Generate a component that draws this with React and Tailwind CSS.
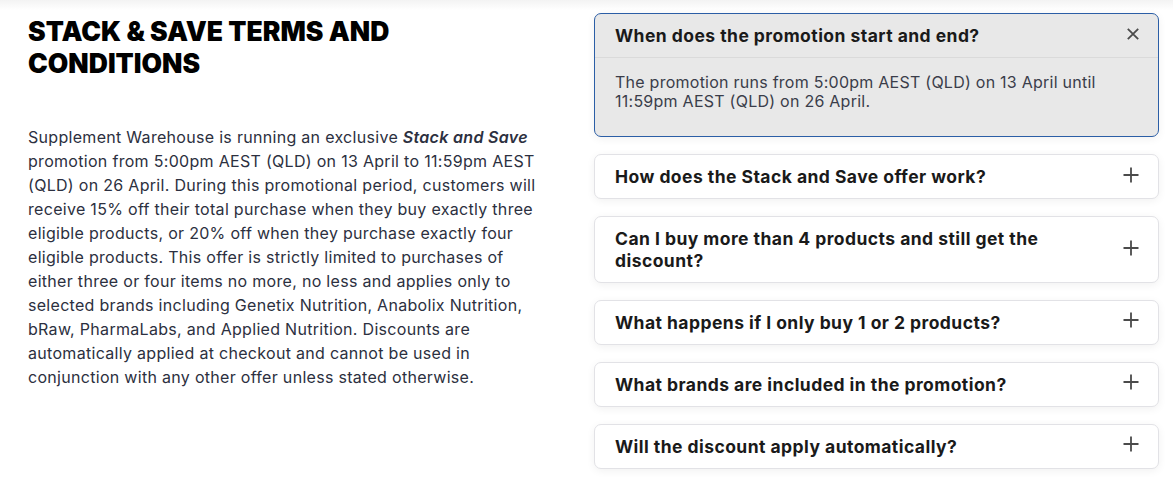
import React, { useState } from "react";

const faqs = [
  {
    q: "When does the promotion start and end?",
    a: "The promotion runs from 5:00pm AEST (QLD) on 13 April until 11:59pm AEST (QLD) on 26 April.",
  },
  { q: "How does the Stack and Save offer work?", a: "" },
  { q: "Can I buy more than 4 products and still get the discount?", a: "" },
  { q: "What happens if I only buy 1 or 2 products?", a: "" },
  { q: "What brands are included in the promotion?", a: "" },
  { q: "Will the discount apply automatically?", a: "" },
];

function PlusIcon() {
  return (
    <svg width="16" height="16" viewBox="0 0 16 16" fill="none" stroke="#4b4b4b" strokeWidth="1.8">
      <path d="M8 0.5v15M0.5 8h15" />
    </svg>
  );
}

function CloseIcon() {
  return (
    <svg width="12" height="12" viewBox="0 0 12 12" fill="none" stroke="#4b4b4b" strokeWidth="1.8">
      <path d="M0.8 0.8l10.4 10.4M11.2 0.8L0.8 11.2" />
    </svg>
  );
}

export default function App() {
  const [open, setOpen] = useState(0);

  return (
    <div className="w-[1173px] h-[482px] bg-white overflow-hidden relative" style={{ fontFamily: "Inter, 'Open Sans', sans-serif" }}>
      <div className="absolute top-0 left-0 right-0 h-[10px] bg-gradient-to-b from-[#f3f3f3] to-white" />
      <div className="relative flex">
        {/* left column: terms copy */}
        <div className="w-[594px] pl-[28px] pr-[40px] pt-[15px]">
          <h2 className="font-black text-[26.5px] leading-[32px] text-black uppercase w-[400px]">
            Stack &amp; Save Terms and Conditions
          </h2>
          <p className="mt-[46px] text-[16px] tracking-[0.3px] leading-[24px] text-[#2c3040] w-[520px]">
            Supplement Warehouse is running an exclusive <em className="font-semibold">Stack and Save</em> promotion from
            5:00pm AEST (QLD) on 13 April to 11:59pm AEST (QLD) on 26 April. During this promotional period,
            customers will receive 15% off their total purchase when they buy exactly three eligible products, or
            20% off when they purchase exactly four eligible products. This offer is strictly limited to purchases
            of either three or four items no more, no less and applies only to selected brands including Genetix
            Nutrition, Anabolix Nutrition, bRaw, PharmaLabs, and Applied Nutrition. Discounts are automatically
            applied at checkout and cannot be used in conjunction with any other offer unless stated otherwise.
          </p>
        </div>

        {/* right column: faq accordion */}
        <div className="w-[565px] pt-[13px] flex flex-col gap-[17px]">
          {faqs.map((f, i) => {
            const isOpen = open === i;
            return (
              <div
                key={i}
                className={`rounded-[7px] border shadow-[0_2px_8px_rgba(0,0,0,0.06)] ${
                  isOpen ? "border-[#2b5ea6] bg-[#e8e8e8]" : "border-[#e2e2e6] bg-white"
                }`}
              >
                <button
                  onClick={() => setOpen(isOpen ? -1 : i)}
                  className={`w-full flex items-center justify-between text-left pl-[20px] pr-[19px] ${
                    isOpen ? "h-[43px]" : "pt-[11px] pb-[10.5px]"
                  }`}
                >
                  <span className="text-[17.5px] tracking-[0.45px] leading-[21.5px] font-bold text-[#1a1a1a] w-[440px]">{f.q}</span>
                  <span className="mb-[4px]">{isOpen ? <CloseIcon /> : <PlusIcon />}</span>
                </button>
                {isOpen && (
                  <div className="border-t border-[#dadada] pl-[20px] pr-[40px] pt-[15px] pb-[25px] text-[16px] tracking-[0.25px] leading-[19px] text-[#3a3d4a]">
                    {f.a}
                  </div>
                )}
              </div>
            );
          })}
        </div>
      </div>
    </div>
  );
}
